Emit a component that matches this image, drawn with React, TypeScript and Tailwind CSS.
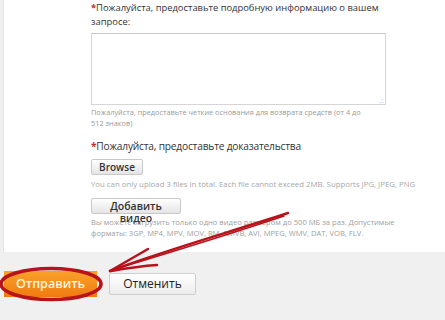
import React from 'react'

const font = { fontFamily: '"Open Sans", "Noto Sans", sans-serif' }

const Star = () => <span className="text-[#c4302b] font-bold">*</span>

const GrayButton = ({ children, className }: { children: React.ReactNode; className?: string }) => (
  <button
    className={
      'border border-[#c9c9c9] rounded-[2px] bg-gradient-to-b from-white to-[#e4e4e4] font-semibold text-[#333] ' +
      (className ?? '')
    }
  >
    {children}
  </button>
)

export default function App() {
  return (
    <div className="relative w-[445px] h-[320px] bg-[#f0f0f0] overflow-hidden" style={font}>
      <div className="ml-[3px] h-[252px] bg-white border-l border-[#e4e4e4] pl-[87px] pt-px">
        <p className="text-[9.4px] leading-[14px] text-[#333] whitespace-nowrap">
          <Star />
          Пожалуйста, предоставьте подробную информацию о вашем
          <br />
          запросе:
        </p>
        <div className="mt-[4px] w-[295px] h-[72px] border border-[#d6d6d6] border-t-[#c8c8c8] relative">
          <span className="absolute right-[2px] bottom-0 text-[7px] leading-[7px] text-[#aaa]">.:</span>
        </div>
        <p className="mt-[2px] text-[7.35px] leading-[11px] text-[#9a9a9a] whitespace-nowrap">
          Пожалуйста, предоставьте четкие основания для возврата средств (от 4 до
          <br />
          512 знаков)
        </p>
        <p className="mt-[10px] text-[10.2px] leading-[14px] tracking-[-0.2px] text-[#333] whitespace-nowrap">
          <Star />
          Пожалуйста, предоставьте доказательства
        </p>
        <GrayButton className="mt-[5px] w-[52px] h-[16px] text-[10px] leading-[12px]">Browse</GrayButton>
        <p className="mt-[2px] text-[7.8px] leading-[11px] text-[#a8a8a8] whitespace-nowrap">
          You can only upload 3 files in total. Each file cannot exceed 2MB. Supports JPG, JPEG, PNG
        </p>
        <div className="mt-[8px] w-[90px] h-[16px]">
          <GrayButton className="w-[90px] h-[16px] flex flex-col items-center pt-[1px] text-[10.5px] leading-[12px]">
            <span>Добавить</span>
            <span className="relative z-10">видео</span>
          </GrayButton>
        </div>
        <p className="mt-[3px] text-[7.6px] leading-[11px] text-[#a0a0a0] whitespace-nowrap">
          Вы можете загрузить только одно видео размером до 500 МБ за раз. Допустимые
          <br />
          форматы: 3GP, MP4, MPV, MOV, RM, RMVB, AVI, MPEG, WMV, DAT, VOB, FLV.
        </p>
      </div>
      <div className="flex items-center gap-[12px] mt-[19px] ml-[4px]">
        <button className="w-[93px] h-[26px] bg-gradient-to-b from-[#f9a12a] to-[#f07a10] text-[#fff6dc] text-[12.5px] font-semibold">
          Отправить
        </button>
        <button className="w-[87px] h-[22px] border border-[#cfcfcf] rounded-[2px] bg-gradient-to-b from-white to-[#ececec] text-[12px] text-[#222]">
          Отменить
        </button>
      </div>
      <svg className="absolute left-0 top-0 pointer-events-none" width="445" height="320">
        <g fill="none" stroke="#b8121b" strokeLinecap="round" strokeWidth="2.5">
          <path d="M288 213 C 230 232, 160 252, 110 271" />
          <path d="M284 216 C 230 234, 165 254, 112 270" strokeWidth="1.5" />
          <path d="M110 271 L148 249" />
          <path d="M111 271 C 128 268, 142 266, 157 265" />
          <ellipse cx="51" cy="284" rx="50" ry="15.5" strokeWidth="3.5" />
        </g>
      </svg>
    </div>
  )
}
